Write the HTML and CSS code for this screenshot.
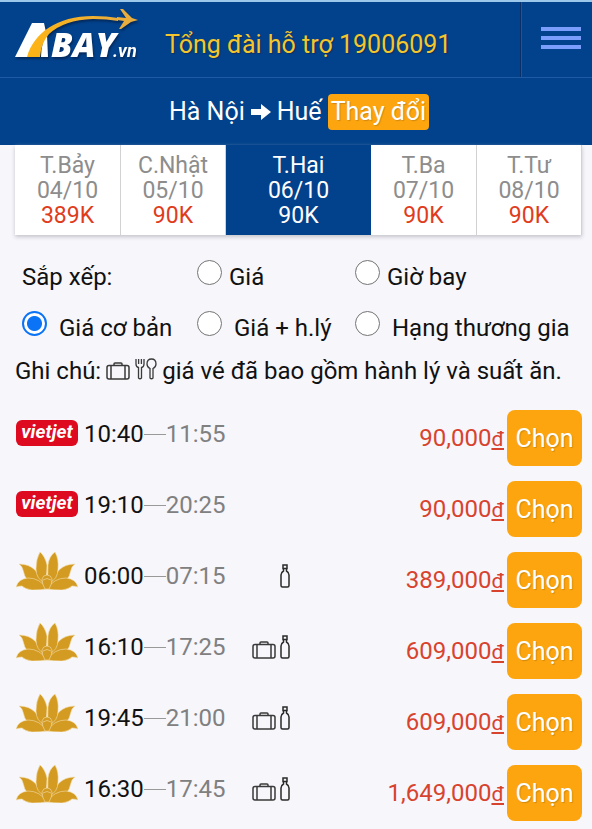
FILE: index.html
```html
<!DOCTYPE html>
<html lang="vi">
<head>
<meta charset="utf-8">
<meta name="viewport" content="width=device-width, initial-scale=1">
<title>Abay.vn</title>
<link rel="stylesheet" href="styles.css">
</head>
<body>
<svg class="sprite" aria-hidden="true">
  <symbol id="bag" viewBox="0 0 24 18">
    <g fill="none" stroke="currentColor" stroke-width="1.500">
      <rect x="1" y="3.500" width="22" height="13.500" rx="2"/>
      <path d="M5 3.500v13.500M19 3.500v13.500M8 3.500V2q0-1 1-1h6q1 0 1 1v1.500"/>
    </g>
  </symbol>
  <symbol id="bottle" viewBox="0 0 10 24">
    <path fill="none" stroke="currentColor" stroke-width="1.500" d="M3 1h4v3.500H3zM3.500 4.500V7Q1 8.500 1 11v10.500q0 1.500 1.500 1.500h5Q9 23 9 21.500V11q0-2.500-2.500-4V4.500"/>
  </symbol>
  <symbol id="cutlery" viewBox="0 0 22 22">
    <g fill="none" stroke="currentColor" stroke-width="1.300">
      <path d="M1 1v5q0 3 2.500 3.500V20q1.500 1.500 3 0V9.500Q9 9 9 6V1M3.600 1v5M6.400 1v5"/>
      <path d="M15 20V10.500Q12 9 12 6q0-5 4.500-5T21 6q0 3-3 4.500V20q-1.500 1.500-3 0z"/>
    </g>
  </symbol>
  <symbol id="lotus" viewBox="0 0 62 38">
    <g fill="#d49b22" stroke="#f3dfb0" stroke-width=".6">
      <path d="M3 12Q13 12 19 18 26 26 31 37 20 35 12 29 8 24 7 18 6 14 3 12z"/>
      <path d="M59 12Q49 12 43 18 36 26 31 37 42 35 50 29 54 24 55 18 56 14 59 12z"/>
      <path d="M24 0Q29 4 31 13 31 24 29 31 20 27 20 17 20 7 24 0z"/>
      <path d="M39 0Q33 4 32 13 31 24 33 31 42 27 42 17 43 7 39 0z"/>
      <path d="M0 35Q2 27 12 26 24 26 31 37 25 38 16 38 9 37 6 34 3 34 0 35z"/>
      <path d="M62 35Q60 27 50 26 38 26 31 37 37 38 46 38 53 37 56 34 59 34 62 35z"/>
      <path d="M31 23Q35 23 36 27 36 32 33 37H29Q26 32 26 27 27 23 31 23z"/>
      <path d="M27 28q4-3 8 0" fill="none"/>
    </g>
  </symbol>
</svg>

<header class="topbar">
  <a class="logo" href="#" aria-label="Abay.vn">
    <svg viewBox="0 0 124 52" width="124" height="52">
      <defs>
        <linearGradient id="gold" x1="0" x2="1"><stop offset="0" stop-color="#ffb414"/><stop offset="1" stop-color="#e9ad3d"/></linearGradient>
      </defs>
      <path fill="#fff" d="M0 47L17 13h12l2 9q-12 9-18 25z"/>
      <path fill="#fff" d="M32 24l1 23h-7q0-14 6-23z"/>
      <path fill="url(#gold)" d="M12 47C19 23 42 6 78 6q14 0 25 2v3Q92 9 78 9 49 10 34 24q-8 9-9 23z"/>
      <path fill="#e9ad3d" d="M102 7l9 1-6-9h3l9 9 6 2-7 2-10 7h-2l5-8-7-1z"/>
      <text x="36" y="47" class="logo-name">BAY</text>
      <text x="98" y="47" class="logo-suffix">.vn</text>
    </svg>
  </a>
  <a class="hotline" href="tel:19006091">Tổng đài hỗ trợ 19006091</a>
  <button class="menu" type="button" aria-label="Menu"><span></span><span></span><span></span></button>
</header>

<div class="route">
  <span>Hà Nội</span>
  <svg viewBox="0 0 20 16" width="20" height="16" aria-hidden="true"><path fill="#fff" d="M0 5h10V0l10 8-10 8v-5H0z"/></svg>
  <span>Huế</span>
  <button class="change" type="button">Thay đổi</button>
</div>

<main>
  <nav class="days">
    <a href="#"><span>T.Bảy</span><span>04/10</span><b>389K</b></a>
    <a href="#"><span>C.Nhật</span><span>05/10</span><b>90K</b></a>
    <a href="#" class="active"><span>T.Hai</span><span>06/10</span><b>90K</b></a>
    <a href="#"><span>T.Ba</span><span>07/10</span><b>90K</b></a>
    <a href="#"><span>T.Tư</span><span>08/10</span><b>90K</b></a>
  </nav>

  <form class="filters">
    <span class="caption">Sắp xếp:</span>
    <label class="near"><input type="radio" name="sort"><span>Giá</span></label>
    <label class="near"><input type="radio" name="sort"><span>Giờ bay</span></label>
    <label><input type="radio" name="fare" checked><span>Giá cơ bản</span></label>
    <label><input type="radio" name="fare"><span>Giá + h.lý</span></label>
    <label><input type="radio" name="fare"><span>Hạng thương gia</span></label>
  </form>

  <p class="note">
    <span>Ghi chú:</span>
    <svg class="bag"><use href="#bag"/></svg>
    <svg class="cutlery"><use href="#cutlery"/></svg>
    <span>giá vé đã bao gồm hành lý và suất ăn.</span>
  </p>

  <ul class="flights">
    <li><span class="vietjet">vietjet</span><span class="time"><span>10:40</span><i></i><span class="to">11:55</span></span><span class="extras"></span><span class="price">90,000<u>đ</u></span><button type="button">Chọn</button></li>
    <li><span class="vietjet">vietjet</span><span class="time"><span>19:10</span><i></i><span class="to">20:25</span></span><span class="extras"></span><span class="price">90,000<u>đ</u></span><button type="button">Chọn</button></li>
    <li><svg class="lotus"><use href="#lotus"/></svg><span class="time"><span>06:00</span><i></i><span class="to">07:15</span></span><span class="extras"><svg class="bottle"><use href="#bottle"/></svg></span><span class="price">389,000<u>đ</u></span><button type="button">Chọn</button></li>
    <li><svg class="lotus"><use href="#lotus"/></svg><span class="time"><span>16:10</span><i></i><span class="to">17:25</span></span><span class="extras"><svg class="bag"><use href="#bag"/></svg><svg class="bottle"><use href="#bottle"/></svg></span><span class="price">609,000<u>đ</u></span><button type="button">Chọn</button></li>
    <li><svg class="lotus"><use href="#lotus"/></svg><span class="time"><span>19:45</span><i></i><span class="to">21:00</span></span><span class="extras"><svg class="bag"><use href="#bag"/></svg><svg class="bottle"><use href="#bottle"/></svg></span><span class="price">609,000<u>đ</u></span><button type="button">Chọn</button></li>
    <li><svg class="lotus"><use href="#lotus"/></svg><span class="time"><span>16:30</span><i></i><span class="to">17:45</span></span><span class="extras"><svg class="bag"><use href="#bag"/></svg><svg class="bottle"><use href="#bottle"/></svg></span><span class="price">1,649,000<u>đ</u></span><button type="button">Chọn</button></li>
  </ul>
</main>
</body>
</html>
```
FILE: styles.css
```css
* { box-sizing: border-box; }

body {
  margin: 0;
  background: #f6f6fb;
  color: #111;
  font: 24px/28px Roboto, sans-serif;
}

a { color: inherit; text-decoration: none; }
button { border: 0; font: inherit; cursor: pointer; }
.sprite { position: absolute; width: 0; height: 0; }

.topbar {
  display: flex;
  align-items: center;
  height: 78px;
  border-top: 2px solid #9cc8ec;
  border-bottom: 1px solid #1f5aa5;
  background: #02428c;
}
.logo { display: flex; margin-left: 15px; padding-bottom: 8px; }
.logo svg { overflow: visible; filter: drop-shadow(1px 2px 1px #03285c); }
.logo text { fill: #fff; }
.logo-name { font: italic 800 34px "Open Sans", sans-serif; }
.logo-suffix { font: italic 700 18px Roboto, sans-serif; }
.hotline {
  flex: 1;
  margin-left: 26px;
  padding-top: 10px;
  color: #f3c62f;
  font-size: 25px;
  text-shadow: 1px 1px 1px #10305c;
}
.menu {
  display: flex;
  flex-direction: column;
  align-items: center;
  align-self: stretch;
  gap: 5px;
  width: 72px;
  padding: 25px 0 0 8px;
  border-left: 1px solid #0a2f66;
  box-shadow: inset 1px 0 #1b54a0;
  background: none;
}
.menu span { width: 40px; height: 4px; background: #7b9dfb; }

.route {
  display: flex;
  align-items: center;
  justify-content: center;
  gap: 6px;
  height: 67px;
  padding-left: 6px;
  background: #02428c;
  color: #fff;
  font-size: 25px;
}
.change {
  height: 36px;
  padding: 1px 3px 0;
  border-radius: 4px;
  background: #fda50f;
  color: #fff;
  text-shadow: 1px 1px 1px #d08a10;
}

.days {
  display: grid;
  grid-template-columns: 106fr 105fr 145fr 106fr 105fr;
  margin: 0 10px 0 15px;
  box-shadow: 0 2px 4px #c4c4cc;
}
.days a {
  display: flex;
  flex-direction: column;
  align-items: center;
  height: 90px;
  padding-top: 8px;
  border-right: 1px solid #d2d2d2;
  background: #fff;
  color: #8d8d8d;
  font-size: 23px;
  line-height: 25px;
}
.days b { color: #e03c1c; font-weight: 400; }
.days .active, .days .active b { color: #fff; }
.days .active { border: 0; background: #02428c; }

.filters {
  display: grid;
  grid-template-columns: 175px 158px 1fr;
  row-gap: 23px;
  margin: 28px 10px 0 22px;
}
.filters label { display: flex; gap: 12px; white-space: nowrap; }
.filters .near { gap: 7px; }
.filters input {
  flex: none;
  appearance: none;
  width: 25px;
  height: 25px;
  margin: -3px 0 0;
  border: 1px solid #747474;
  border-radius: 50%;
  background: #fff;
}
.filters input:checked {
  border: 2px solid #0b73f6;
  background: radial-gradient(#0b73f6 7px, #fff 8px);
}

.note {
  display: flex;
  align-items: center;
  gap: 5px;
  margin: 15px 15px 0;
  white-space: nowrap;
}
.bag { width: 24px; height: 18px; color: #3a3a3a; }
.cutlery { width: 22px; height: 22px; margin-bottom: 4px; color: #3a3a3a; }
.bottle { width: 10px; height: 24px; color: #2a2a2a; }

.flights {
  display: grid;
  gap: 15px;
  margin: 25px 10px 0 16px;
  padding: 0;
  list-style: none;
}
.flights li { display: flex; align-items: center; height: 56px; }
.vietjet {
  width: 62px;
  height: 26px;
  margin-bottom: 10px;
  border-radius: 6px;
  background: #de0a20;
  color: #fff;
  font: italic 700 19px/24px Roboto, sans-serif;
  text-align: center;
}
.lotus { width: 62px; height: 38px; margin-bottom: 18px; }
.time { display: flex; align-items: center; margin: 0 0 8px 6px; }
.time i { width: 22px; border-top: 1px solid #999; }
.time .to { color: #808080; }
.extras {
  display: flex;
  align-items: flex-end;
  justify-content: flex-end;
  gap: 4px;
  width: 64px;
  margin-bottom: 8px;
}
.price { margin-left: auto; color: #d8432e; }
.price u { font-size: 21px; }
.flights button {
  width: 75px;
  height: 56px;
  margin-left: 3px;
  padding: 2px 0 0;
  border-radius: 8px;
  background: #fda50f;
  color: #fff;
  font-size: 25px;
  text-shadow: 1px 1px 1px #d08a10;
}
```
